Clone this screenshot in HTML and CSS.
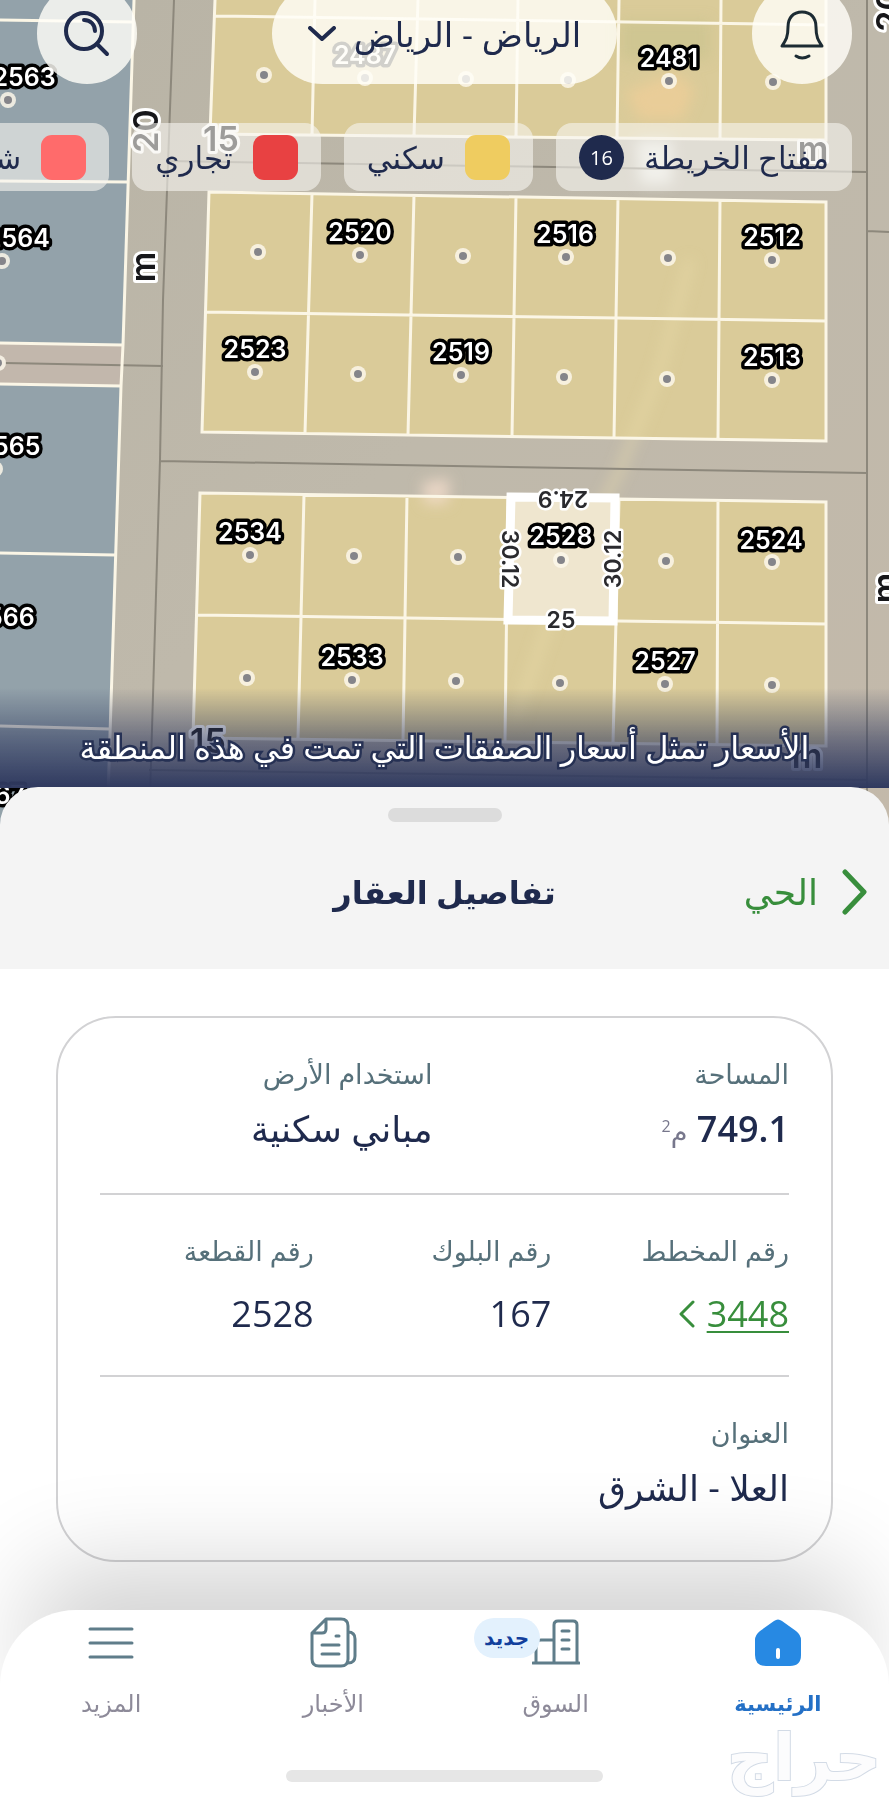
FILE: index.html
```
<!DOCTYPE html>
<html lang="ar" dir="rtl">
<head>
<meta charset="UTF-8" />
<meta name="viewport" content="width=device-width, initial-scale=1" />
<title>تفاصيل العقار</title>
<link rel="stylesheet" href="styles.css">
</head>
<body>
<main class="screen">

<section class="map">
<svg class="map-canvas" viewBox="0 0 889 830" preserveAspectRatio="xMidYMin slice" direction="ltr" aria-hidden="true">
	<defs>
		<linearGradient id="ground" x1="0" y1="0" x2="1" y2="1">
			<stop offset="0" stop-color="#b8b3a5"/>
			<stop offset=".5" stop-color="#bfb9ab"/>
			<stop offset="1" stop-color="#c3b9aa"/>
		</linearGradient>
		<filter id="soft" x="-50%" y="-50%" width="200%" height="200%"><feGaussianBlur stdDeviation="7"/></filter>
		<g id="dot"><circle r="8" fill="#fbf7ea" opacity=".85"/><circle r="4" fill="#85858a"/></g>
	</defs>
	<rect width="889" height="830" fill="url(#ground)"/>

	<!-- parcels -->
	<path class="blue" d="M0 0H134L123 345 0 343ZM0 384 121 386 107 830H0Z"/>
	<path fill="#c2b7ac" d="M0 343 123 345 121 386 0 384Z"/>
	<path class="yellow" d="M215 0H826V140L210 134ZM209 192 826 202V441L202 432ZM200 493 826 502V746L193 738Z"/>
	<g filter="url(#soft)">
		<path fill="#f4cf98" opacity=".6" d="M625 92 675 72 695 90 682 120 640 120Z"/>
		<path fill="#b9bd86" opacity=".35" d="M620 20H710V60H620Z"/>
		<path fill="#eef0ea" opacity=".9" d="M636 140H672V184H640Z"/>
		<path fill="#f3dccb" opacity=".8" d="M422 482 450 478 448 504 424 504Z"/>
		<path fill="none" stroke="#eee0ae" stroke-width="8" opacity=".5" d="M690 260 660 370 620 470 560 590 515 720"/>
	</g>

	<path class="road" d="M174 0 163 300 160 460 149 830M5 363 163 366M167 161 867 172M160 461 867 473M867 0V830M867 231 889 232M149 770 867 780"/>

	<path class="edge" d="M134 0 123 345 121 386 107 830M0 20 133 22M0 181 128 182M0 343 123 345M0 384 121 386M0 553 115 555M0 726 109 729"/>
	<path class="edge" d="M215 0 210 134 826 140V0M215 16 826 25M315 0 312 135M418 0 414 136M518 0 516 137M619 0 617 138M721 0 720 139"/>
	<path class="edge" d="M209 192 826 202V441L202 432ZM205 312 826 321M312 194 305 433M414 195 408 435M516 197 512 436M618 199 614 438M720 200 718 439"/>
	<path class="edge" d="M200 493 826 502V746L193 738ZM196 615 826 624M304 495 298 739M407 496 403 741M508 498 505 742M619 499 613 743M718 500 717 745"/>

	<!-- selected parcel -->
	<path class="selected" d="M511 497 615 498 613 621 508 620Z"/>

	<use href="#dot" x="264" y="75"/><use href="#dot" x="365" y="78"/><use href="#dot" x="466" y="79"/><use href="#dot" x="568" y="80"/><use href="#dot" x="669" y="81"/><use href="#dot" x="773" y="82"/>
	<use href="#dot" x="258" y="252"/><use href="#dot" x="360" y="255"/><use href="#dot" x="463" y="256"/><use href="#dot" x="566" y="257"/><use href="#dot" x="668" y="258"/><use href="#dot" x="772" y="260"/>
	<use href="#dot" x="255" y="372"/><use href="#dot" x="358" y="374"/><use href="#dot" x="461" y="375"/><use href="#dot" x="564" y="377"/><use href="#dot" x="667" y="379"/><use href="#dot" x="772" y="380"/>
	<use href="#dot" x="250" y="555"/><use href="#dot" x="354" y="556"/><use href="#dot" x="458" y="557"/><use href="#dot" x="561" y="560"/><use href="#dot" x="666" y="561"/><use href="#dot" x="772" y="562"/>
	<use href="#dot" x="247" y="678"/><use href="#dot" x="352" y="680"/><use href="#dot" x="456" y="681"/><use href="#dot" x="560" y="683"/><use href="#dot" x="665" y="684"/><use href="#dot" x="772" y="685"/>
	<use href="#dot" x="8" y="100"/><use href="#dot" x="2" y="261"/><use href="#dot" x="-2" y="363"/><use href="#dot" x="-5" y="469"/>

	<g class="parcel-no">
		<text x="365" y="64">2487</text>
		<text x="669" y="67">2481</text>
		<text x="360" y="241">2520</text>
		<text x="565" y="243">2516</text>
		<text x="772" y="246">2512</text>
		<text x="255" y="358">2523</text>
		<text x="461" y="361">2519</text>
		<text x="772" y="366">2513</text>
		<text x="250" y="541">2534</text>
		<text x="561" y="545">2528</text>
		<text x="771" y="549">2524</text>
		<text x="352" y="666">2533</text>
		<text x="665" y="670">2527</text>
		<text x="24" y="86">2563</text>
		<text x="18" y="247">2564</text>
		<text x="9" y="455">2565</text>
		<text x="3" y="626">2566</text>
		<text x="-6" y="804">2567</text>
	</g>

	<g class="side-len">
		<text x="561" y="628">25</text>
		<text transform="translate(563 491) rotate(180)">24.9</text>
		<text transform="translate(502 559) rotate(90)">30.12</text>
		<text transform="translate(621 559) rotate(-90)">30.12</text>
	</g>

	<g class="street">
		<text x="221" y="151">15</text>
		<text x="813" y="161">m</text>
		<text x="208" y="753">15</text>
		<text x="807" y="768">m</text>
		<text transform="translate(158 131) rotate(-90)">20</text>
		<text transform="translate(155 267) rotate(-90)">m</text>
		<text transform="translate(901 10) rotate(-90)">20</text>
		<text transform="translate(897 588) rotate(-90)">m</text>
	</g>
</svg>

<div class="map-ui">
	<header class="topbar">
		<button class="round" type="button" aria-label="التنبيهات">
			<svg width="48" height="56" viewBox="0 0 48 56" fill="none" stroke="#1c2b33" stroke-width="3" stroke-linecap="round" stroke-linejoin="round">
				<path d="M24 6c-9 0-14 6-14 15 0 10-2 13-6 19h40c-4-6-6-9-6-19 0-9-5-15-14-15Z"/>
				<path d="M18 50q6 4 13 0"/>
			</svg>
		</button>
		<button class="city" type="button">
			<span>الرياض - الرياض</span>
			<svg width="28" height="16" viewBox="0 0 28 16" fill="none" stroke="#1f2a4d" stroke-width="4" stroke-linecap="round" stroke-linejoin="round"><path d="M2 2 14 13 26 2"/></svg>
		</button>
		<button class="round" type="button" aria-label="بحث">
			<svg width="48" height="48" viewBox="0 0 48 48" fill="none" stroke="#1f2a4d" stroke-width="4" stroke-linecap="round">
				<circle cx="21" cy="21" r="18"/>
				<path d="M34 34 44 44M21 10c7 0 11 5 11 11"/>
			</svg>
		</button>
	</header>

	<div class="legend">
		<button class="chip" type="button"><span>مفتاح الخريطة</span><b class="count">16</b></button>
		<div class="chip"><i class="swatch swatch-home"></i><span>سكني</span></div>
		<div class="chip"><i class="swatch swatch-shop"></i><span>تجاري</span></div>
		<div class="chip"><i class="swatch swatch-flat"></i><span>شقق سكنية</span></div>
	</div>

	<p class="notice">الأسعار تمثل أسعار الصفقات التي تمت في هذه المنطقة</p>
</div>
</section>

<section class="sheet">
	<header class="sheet-head">
		<div class="handle"></div>
		<div class="sheet-bar">
			<a class="back" href="#">
				<svg width="26" height="46" viewBox="0 0 26 46" fill="none" stroke="#388e3c" stroke-width="5" stroke-linecap="round" stroke-linejoin="round"><path d="M3 3 22 23 3 43"/></svg>
				<span>الحي</span>
			</a>
			<h1>تفاصيل العقار</h1>
		</div>
	</header>

	<div class="sheet-body">
		<div class="card">
			<dl class="row two">
				<div><dt>المساحة</dt><dd class="medium">749.1 <small>م<sup>2</sup></small></dd></div>
				<div><dt>استخدام الأرض</dt><dd>مباني سكنية</dd></div>
			</dl>
			<dl class="row three">
				<div>
					<dt>رقم المخطط</dt>
					<dd class="plan">
						<a href="#">3448</a>
						<svg width="16" height="28" viewBox="0 0 16 28" fill="none" stroke="#388e3c" stroke-width="3" stroke-linecap="round" stroke-linejoin="round"><path d="M14 2 2 14 14 26"/></svg>
					</dd>
				</div>
				<div><dt>رقم البلوك</dt><dd>167</dd></div>
				<div><dt>رقم القطعة</dt><dd>2528</dd></div>
			</dl>
			<dl class="row">
				<div><dt>العنوان</dt><dd>العلا - الشرق</dd></div>
			</dl>
		</div>
	</div>
</section>

<nav class="tabs">
	<div class="tab-list">
		<a class="tab active" href="#">
			<svg width="48" height="52" viewBox="0 0 48 52">
				<path fill="#2789e3" d="M20 4q4-3 8 0L42 14q5 4 5 9V38q0 11-11 11H12Q1 49 1 38V23q0-5 5-9Z"/>
				<path stroke="#fff" stroke-width="4" stroke-linecap="round" d="M24 33V40"/>
			</svg>
			<span>الرئيسية</span>
		</a>
		<a class="tab" href="#">
			<svg width="48" height="52" viewBox="0 0 48 52" fill="none" stroke="#5f7d8a" stroke-width="3" stroke-linecap="round" stroke-linejoin="round">
				<path d="M1 46H47M22 46V8q0-4 4-4H41q4 0 4 4V46M22 23H9q-5 0-5 5V46M30 14H37M30 23H37M30 32H37"/>
			</svg>
			<b class="badge">جديد</b>
			<span>السوق</span>
		</a>
		<a class="tab" href="#">
			<svg width="48" height="52" viewBox="0 0 48 52" fill="none" stroke="#5f7d8a" stroke-width="3" stroke-linecap="round" stroke-linejoin="round">
				<path d="M17 2H32q7 0 7 7V42q0 7-7 7H10q-7 0-7-7V16ZM17 2V12q0 4-4 4H3M39 15q7 0 7 7V39q0 7-7 7M27 19H30M13 28H30M13 37H30"/>
			</svg>
			<span>الأخبار</span>
		</a>
		<a class="tab" href="#">
			<svg width="48" height="52" viewBox="0 0 48 52" fill="none" stroke="#5f7d8a" stroke-width="3" stroke-linecap="round"><path d="M3 12H45M3 26H45M3 40H45"/></svg>
			<span>المزيد</span>
		</a>
	</div>
	<div class="home-bar"></div>
	<span class="stamp">حراج</span>
</nav>

</main>
</body>
</html>
```
FILE: styles.css
```
* {
	margin: 0;
	padding: 0;
	box-sizing: border-box;
}

body {
	background: #fff;
	color: #1f2a4d;
	font: 32px/50px "Open Sans", "DejaVu Sans", sans-serif;
}

button {
	border: none;
	color: inherit;
	font: inherit;
}

a {
	color: inherit;
	text-decoration: none;
}

svg {
	display: block;
	flex: none;
}

.screen {
	display: flex;
	flex-direction: column;
	min-height: 100vh;
	overflow: hidden;
}

/* map */
.map {
	display: grid;
	height: 830px;
	overflow: hidden;
}

.map-canvas,
.map-ui {
	grid-area: 1 / 1;
	width: 100%;
	min-width: 0;
}

.map-canvas {
	height: 830px;
}

.map-ui {
	display: flex;
	flex-direction: column;
	height: 788px;
	z-index: 1;
}

.blue { fill: #93a2aa; }
.yellow { fill: #dacb99; }

.road {
	fill: none;
	stroke: #8d887c;
	stroke-width: 2;
}

.edge {
	fill: none;
	stroke: #fbf6e6;
	stroke-width: 3;
}

.selected {
	fill: #efe6cf;
	stroke: #fff;
	stroke-width: 9;
}

.parcel-no,
.side-len,
.street {
	font-family: Inter, sans-serif;
	font-weight: 600;
	text-anchor: middle;
	paint-order: stroke;
	stroke-linejoin: round;
}

.parcel-no {
	font-size: 25px;
	fill: #fff;
	stroke: #000;
	stroke-width: 7px;
}

.side-len {
	font-size: 23px;
	fill: #2a2a2e;
	stroke: #fff;
	stroke-width: 5px;
}

.street {
	font-size: 34px;
	fill: #17171a;
	stroke: #fff;
	stroke-width: 6px;
}

.topbar {
	display: flex;
	justify-content: space-between;
	height: 101px;
	margin-top: -17px;
	padding: 0 37px;
}

.round,
.city {
	display: flex;
	align-items: center;
	justify-content: center;
	border-radius: 51px;
	background: rgba(255, 254, 248, .82);
}

.round {
	width: 100px;
}

.city {
	gap: 18px;
	width: 345px;
	font-size: 34px;
}

.legend {
	display: flex;
	gap: 23px;
	margin-top: 39px;
	padding-right: 37px;
	overflow: hidden;
}

.chip {
	display: flex;
	flex: none;
	align-items: center;
	gap: 20px;
	height: 68px;
	padding: 0 23px;
	border-radius: 16px;
	background: rgba(247, 245, 240, .6);
	font-size: 31px;
	white-space: nowrap;
}

.count {
	width: 45px;
	height: 45px;
	border-radius: 50%;
	background: #1f2a4d;
	color: #fff;
	font-size: 20px;
	font-weight: 400;
	line-height: 46px;
	text-align: center;
}

.swatch {
	width: 45px;
	height: 45px;
	border-radius: 11px;
}

.swatch-home { background: #efcc60; }
.swatch-shop { background: #e84142; }
.swatch-flat { background: #ff6b6b; }

.notice {
	margin-top: auto;
	padding: 34px 0 16px;
	background: linear-gradient(rgba(47, 57, 95, 0), rgba(47, 57, 95, .55) 50%, #2f395f);
	color: #fff;
	font-size: 32px;
	text-align: center;
	white-space: nowrap;
	-webkit-text-stroke: 5px #263154;
	paint-order: stroke;
}

/* details sheet */
.sheet {
	display: flex;
	flex: 1;
	flex-direction: column;
	margin-top: -43px;
	z-index: 2;
}

.sheet-head {
	height: 182px;
	padding-top: 21px;
	border-radius: 38px 38px 0 0;
	background: #f4f4f4;
}

.handle {
	width: 114px;
	height: 14px;
	margin: 0 auto;
	border-radius: 7px;
	background: #dcdcdc;
}

.sheet-bar {
	display: grid;
	grid-template-columns: 1fr auto 1fr;
	align-items: center;
	margin-top: 45px;
	padding: 0 21px;
}

.back {
	display: flex;
	align-items: center;
	gap: 24px;
	color: #388e3c;
	font-size: 36px;
}

h1 {
	font-size: 32px;
	line-height: 50px;
}

.sheet-body {
	flex: 1;
	padding: 47px 56px;
	background: #fff;
}

.card {
	padding: 0 42px;
	border: 2px solid #d2d2d4;
	border-radius: 60px;
}

.row {
	display: grid;
	gap: 24px;
	padding: 36px 0;
}

.row + .row {
	border-top: 2px solid #d2d2d4;
}

.row:last-child {
	padding-bottom: 47px;
}

.two { grid-template-columns: 1fr 1fr; }
.three { grid-template-columns: 1fr 1fr 1fr; }

dt {
	color: #56707a;
	font-size: 27px;
	line-height: 40px;
}

dd {
	margin-top: 10px;
	font-size: 36px;
}

.three dd {
	margin-top: 18px;
}

.medium {
	font-weight: 600;
}

small {
	color: #77778c;
	font-size: 27px;
	font-weight: 400;
}

sup {
	font-size: 16px;
	line-height: 0;
}

.plan {
	display: flex;
	align-items: center;
	gap: 12px;
	color: #388e3c;
}

.plan a {
	text-decoration: underline;
	text-decoration-thickness: 2px;
	text-underline-offset: 4px;
}

/* bottom tabs */
.tabs {
	position: relative;
	height: 190px;
	padding-top: 7px;
	border-radius: 76px 76px 0 0;
	background: #fff;
	box-shadow: 0 -70px 100px -30px rgba(0, 0, 0, .19);
	z-index: 3;
}

.tab-list {
	display: grid;
	grid-template-columns: repeat(4, 1fr);
}

.tab {
	display: flex;
	position: relative;
	flex-direction: column;
	align-items: center;
	gap: 14px;
	color: #8d8a99;
	font-size: 24px;
	line-height: 40px;
}

.active {
	color: #2470c6;
	font-size: 21px;
	font-weight: 700;
}

.badge {
	position: absolute;
	top: 1px;
	right: calc(50% + 16px);
	width: 66px;
	border-radius: 20px;
	background: #e3f1fd;
	color: #123f9c;
	font-size: 20px;
	text-align: center;
}

.home-bar {
	width: 317px;
	height: 12px;
	margin: 47px auto 0;
	border-radius: 6px;
	background: #e6e6e6;
}

.stamp {
	position: absolute;
	right: 8px;
	bottom: 12px;
	color: #fcfcfd;
	font-size: 64px;
	font-weight: 700;
	line-height: 64px;
	-webkit-text-stroke: 2px #d3dbe6;
	paint-order: stroke;
}
```
